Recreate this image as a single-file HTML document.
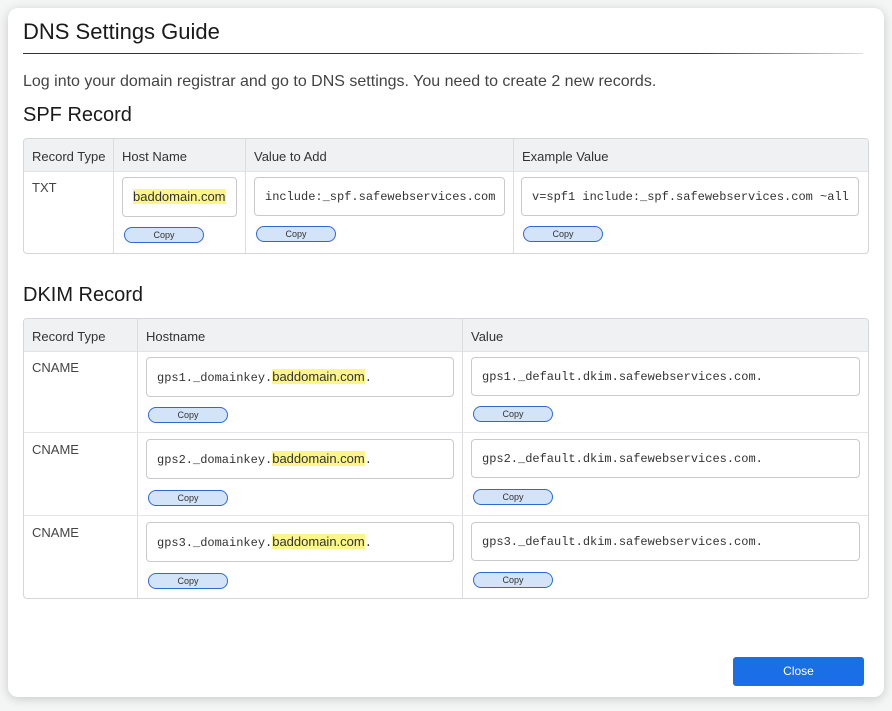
<!DOCTYPE html>
<html><head><style>
body{margin:0;width:892px;height:711px;background:#f4f5f5;font-family:"Liberation Sans",sans-serif;position:relative;overflow:hidden;color:#222}
.m{position:absolute;left:8px;top:8px;width:876px;height:689px;background:#fff;border-radius:10px;box-shadow:0 2px 10px rgba(0,0,0,.18)}
.a{position:absolute}
.tb{position:absolute;border:1px solid #d4d6d9;border-radius:4px;overflow:hidden;background:#fff}
.hd{position:absolute;left:0;right:0;top:0;background:#f0f1f3;border-bottom:1px solid #e2e3e5}
.vl{position:absolute;top:0;bottom:0;width:1px;background:#dcdde0}
.hl{position:absolute;left:0;right:0;height:1px;background:#e4e5e7}
.ht{position:absolute;font-size:13px;color:#333}
.in{position:absolute;border:1px solid #c8cacd;border-radius:4px;font-family:"Liberation Mono",monospace;font-size:12px;color:#333;line-height:38px;padding-left:10px;box-sizing:border-box;white-space:nowrap;overflow:hidden}
.hi{background:#fbf58a}
.cp{position:absolute;width:80px;height:16px;box-sizing:border-box;border:1px solid #2c6bd6;border-radius:8px;background:#d3e3f8;font-size:9px;text-align:center;line-height:15px;color:#333}
</style></head><body>
<div class="m"></div>
<div class="a" style="left:23px;top:19px;font-size:22px;color:#1a1a1a">DNS Settings Guide</div>
<div class="a" style="left:23px;top:53px;width:840px;height:1px;background:linear-gradient(90deg,#333 80%,#ddd)"></div>
<div class="a" style="left:23px;top:73px;font-size:16px;color:#444">Log into your domain registrar and go to DNS settings. You need to create 2 new records.</div>
<div class="a" style="left:23px;top:104px;font-size:20px;color:#1a1a1a">SPF Record</div>

<div class="tb" style="left:23px;top:138px;width:844px;height:114px">
<div class="hd" style="height:32px"></div>
<div class="vl" style="left:89px"></div><div class="vl" style="left:221px"></div><div class="vl" style="left:489px"></div>
<div class="ht" style="left:8px;top:10px">Record Type</div>
<div class="ht" style="left:98px;top:10px">Host Name</div>
<div class="ht" style="left:230px;top:10px">Value to Add</div>
<div class="ht" style="left:498px;top:10px">Example Value</div>
<div class="ht" style="left:8px;top:41px;color:#444">TXT</div>
</div>
<div class="in" style="left:122px;top:177px;width:115px;height:40px;font-family:'Liberation Sans',sans-serif;font-size:13px"><span class="hi">baddomain.com</span></div>
<div class="in" style="left:254px;top:177px;width:251px;height:39px">include:_spf.safewebservices.com</div>
<div class="in" style="left:521px;top:177px;width:338px;height:39px">v=spf1 include:_spf.safewebservices.com ~all</div>
<div class="cp" style="left:124px;top:227px">Copy</div>
<div class="cp" style="left:256px;top:226px">Copy</div>
<div class="cp" style="left:523px;top:226px">Copy</div>

<div class="a" style="left:23px;top:284px;font-size:20px;color:#1a1a1a">DKIM Record</div>
<div class="tb" style="left:23px;top:318px;width:844px;height:279px">
<div class="hd" style="height:32px"></div>
<div class="vl" style="left:113px"></div><div class="vl" style="left:438px"></div>
<div class="hl" style="top:113px"></div><div class="hl" style="top:196px"></div>
<div class="ht" style="left:8px;top:10px">Record Type</div>
<div class="ht" style="left:122px;top:10px">Hostname</div>
<div class="ht" style="left:447px;top:10px">Value</div>
<div class="ht" style="left:8px;top:41px;color:#444">CNAME</div>
<div class="ht" style="left:8px;top:123px;color:#444">CNAME</div>
<div class="ht" style="left:8px;top:206px;color:#444">CNAME</div>
</div>
<div class="in" style="left:146px;top:357px;width:308px;height:40px">gps1._domainkey.<span class="hi" style="font-family:'Liberation Sans',sans-serif;font-size:13px">baddomain.com</span>.</div>
<div class="in" style="left:471px;top:357px;width:389px;height:39px">gps1._default.dkim.safewebservices.com.</div>
<div class="cp" style="left:148px;top:407px">Copy</div><div class="cp" style="left:473px;top:406px">Copy</div>
<div class="in" style="left:146px;top:439px;width:308px;height:40px">gps2._domainkey.<span class="hi" style="font-family:'Liberation Sans',sans-serif;font-size:13px">baddomain.com</span>.</div>
<div class="in" style="left:471px;top:439px;width:389px;height:39px">gps2._default.dkim.safewebservices.com.</div>
<div class="cp" style="left:148px;top:490px">Copy</div><div class="cp" style="left:473px;top:489px">Copy</div>
<div class="in" style="left:146px;top:522px;width:308px;height:40px">gps3._domainkey.<span class="hi" style="font-family:'Liberation Sans',sans-serif;font-size:13px">baddomain.com</span>.</div>
<div class="in" style="left:471px;top:522px;width:389px;height:39px">gps3._default.dkim.safewebservices.com.</div>
<div class="cp" style="left:148px;top:573px">Copy</div><div class="cp" style="left:473px;top:572px">Copy</div>

<div class="a" style="left:733px;top:657px;width:131px;height:29px;background:#1a6fe6;border-radius:3px;color:#fff;font-size:12px;text-align:center;line-height:29px">Close</div>
</body></html>
